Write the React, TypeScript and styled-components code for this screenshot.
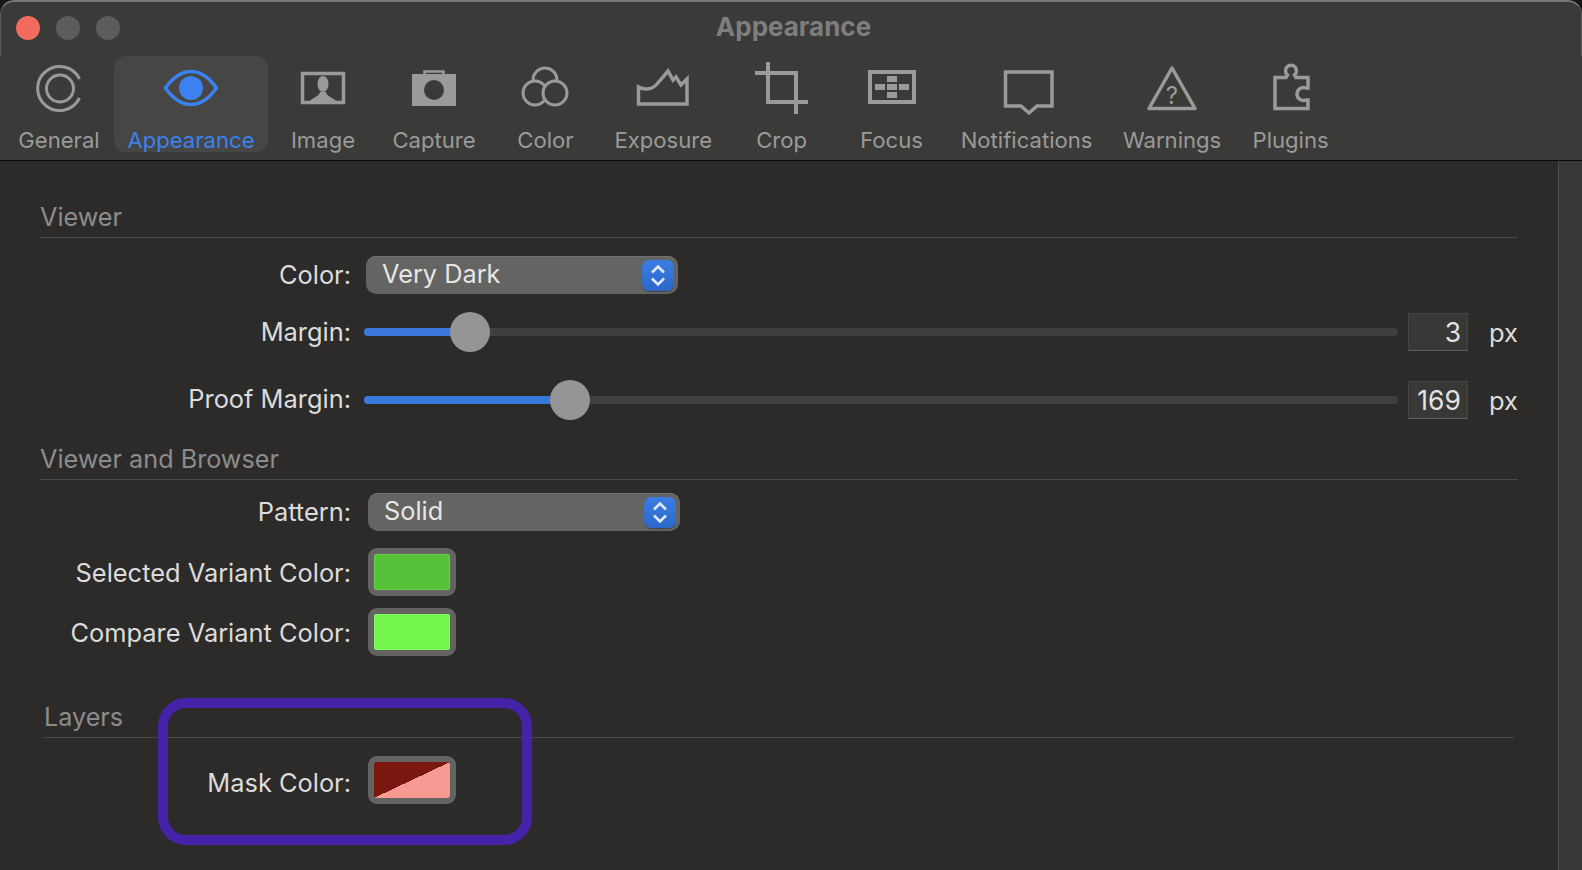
import styled, { createGlobalStyle } from "styled-components";

const GlobalStyle = createGlobalStyle`
  html, body {
    margin: 0;
    padding: 0;
    background: #161616;
  }
  body {
    font-family: Inter, "Liberation Sans", sans-serif;
    overflow: hidden;
  }
`;

const Window = styled.div`
  position: relative;
  width: 1582px;
  height: 870px;
  display: flex;
  flex-direction: column;
  overflow: hidden;
  background: #2c2b2a;
  border-radius: 14px 14px 0 0;
`;

const TitleBar = styled.div`
  height: 56px;
  flex: none;
  display: flex;
  align-items: center;
  gap: 16px;
  padding: 0 0 2px 15px;
  background: #3a3a38;
  border-radius: 14px 14px 0 0;
  border-style: solid;
  border-width: 2px 1px 0;
  border-color: #777775 #5c5c5a transparent;
  box-sizing: border-box;
`;

const Light = styled.span<{ $color: string }>`
  width: 24px;
  height: 24px;
  border-radius: 50%;
  background: ${(p) => p.$color};
`;

const Title = styled.div`
  flex: 1;
  text-align: center;
  margin-left: -130px;
  font-size: 26px;
  font-weight: 700;
  color: #7e7e7e;
  padding-bottom: 4px;
`;

const Toolbar = styled.div`
  height: 105px;
  flex: none;
  box-sizing: border-box;
  display: flex;
  align-items: flex-start;
  padding-left: 4px;
  background: #3a3a38;
  border-bottom: 1px solid #0c0c0c;
`;

const Tab = styled.div<{ $width: number; $active?: boolean }>`
  width: ${(p) => p.$width}px;
  height: 96px;
  flex: none;
  display: flex;
  flex-direction: column;
  align-items: center;
  border-radius: 12px;
  padding-top: 8px;
  box-sizing: border-box;
  background: ${(p) => (p.$active ? "#464645" : "transparent")};
  color: ${(p) => (p.$active ? "#3b82f0" : "#9a9a9a")};
`;

const TabIcon = styled.svg`
  width: 60px;
  height: 52px;
  flex: none;
  overflow: visible;
`;

const TabLabel = styled.span`
  font-size: 22.1px;
  line-height: 24px;
  margin-top: 12px;
  white-space: nowrap;
`;

const Body = styled.div`
  flex: 1;
  display: flex;
  min-height: 0;
`;

const Main = styled.div`
  flex: 1;
  padding: 37px 40px 0;
  color: #dcdcdc;
`;

const ScrollStrip = styled.div`
  width: 24px;
  flex: none;
  box-sizing: border-box;
  background: #383836;
  border-left: 1px solid #4a4a48;
`;

const Section = styled.section<{ $top?: number }>`
  margin-top: ${(p) => p.$top ?? 0}px;
`;

const Heading = styled.h2<{ $inset?: number }>`
  margin: 0 ${(p) => p.$inset ?? 0}px;
  height: 39px;
  font-size: 25.2px;
  font-weight: 400;
  line-height: 38px;
  color: #8c8c8c;
  border-bottom: 1px solid #494947;
`;

const Row = styled.div<{ $top: number; $gap: number }>`
  margin-top: ${(p) => p.$top}px;
  display: grid;
  grid-template-columns: 311px 1fr;
  column-gap: ${(p) => p.$gap}px;
  align-items: center;
`;

const Label = styled.label<{ $drop?: number }>`
  text-align: right;
  font-size: 25.4px;
  line-height: 38px;
  white-space: nowrap;
  margin-top: ${(p) => (p.$drop ?? 0) * 2}px;
`;

const SelectBox = styled.div`
  position: relative;
  width: 312px;
  height: 38px;
  box-sizing: border-box;
  padding: 0 0 3px 16px;
  display: flex;
  align-items: center;
  font-size: 25.3px;
  color: #e6e6e6;
  background: #646462;
  border-radius: 10px;
  box-shadow: inset 0 1px 0 #727270;
`;

const SelectArrows = styled.span`
  position: absolute;
  right: 4px;
  top: 4px;
  width: 32px;
  height: 31px;
  display: flex;
  align-items: center;
  justify-content: center;
  border-radius: 7px;
  background: linear-gradient(#3b7de3, #2c67c9);
  box-shadow: 0 1px 1px rgba(0, 0, 0, 0.3);
`;

const SliderRowBody = styled.div`
  display: flex;
  align-items: center;
  height: 38px;
`;

const SliderTrack = styled.div`
  position: relative;
  flex: 1;
  height: 8px;
  border-radius: 4px;
  background: #3f3f3d;
`;

const SliderFill = styled.div`
  height: 100%;
  border-radius: 4px 0 0 4px;
  background: #3a78dc;
`;

const SliderThumb = styled.div`
  position: absolute;
  top: 50%;
  width: 40px;
  height: 40px;
  margin: -20px 0 0 -20px;
  border-radius: 50%;
  background: #959595;
`;

const NumberBox = styled.div`
  width: 60px;
  height: 38px;
  flex: none;
  margin-left: 10px;
  box-sizing: border-box;
  padding-right: 6px;
  display: flex;
  align-items: center;
  justify-content: flex-end;
  font-size: 26.5px;
  color: #e2e2e2;
  background: #383836;
  border: 1px solid #444442;
  border-bottom-color: #5e5e5c;
`;

const Unit = styled.span`
  width: 29px;
  flex: none;
  margin-left: 21px;
  font-size: 25.5px;
  white-space: nowrap;
`;

const ColorWell = styled.div`
  width: 88px;
  height: 48px;
  box-sizing: border-box;
  padding: 6px;
  background: #636361;
  border-radius: 9px;
`;

const ColorFace = styled.div<{ $fill: string; $edge: string }>`
  height: 100%;
  border-radius: 3px;
  background: ${(p) => p.$fill};
  box-shadow: inset 0 0 0 1px ${(p) => p.$edge};
`;

const Callout = styled.div`
  position: absolute;
  left: 158px;
  top: 698px;
  width: 374px;
  height: 147px;
  box-sizing: border-box;
  border: 10px solid #4523a9;
  border-radius: 28px;
  pointer-events: none;
`;

const Stroke = { fill: "none", stroke: "currentColor", strokeWidth: 3.5 };

const tabs = [
  {
    name: "General",
    width: 110,
    icon: (
      <>
        <path d="M50.5 15 A22 22 0 1 0 50.5 34" {...Stroke} strokeWidth={3} />
        <circle cx="31" cy="24.5" r="13.5" {...Stroke} strokeWidth={3} />
      </>
    ),
  },
  {
    name: "Appearance",
    width: 154,
    active: true,
    icon: (
      <>
        <path d="M4.5 24 C13 12 21 7.5 30 7.5 C39 7.5 47 12 55.5 24 C47 36 39 40.5 30 40.5 C21 40.5 13 36 4.5 24Z" {...Stroke} />
        <circle cx="30" cy="24" r="12" fill="currentColor" />
      </>
    ),
  },
  {
    name: "Image",
    width: 110,
    icon: (
      <>
        <rect x="9.5" y="9.5" width="41" height="29" {...Stroke} />
        <ellipse cx="30" cy="20" rx="5.5" ry="8" fill="currentColor" />
        <path d="M16 38 C20 33 26 33 27 28 H33 C34 33 40 33 44 38 Z" fill="currentColor" />
      </>
    ),
  },
  {
    name: "Capture",
    width: 112,
    icon: (
      <>
        <path d="M20.5 11 V7.5 H39.5 V11" {...Stroke} strokeWidth={2.5} />
        <rect x="8" y="10" width="44" height="32" fill="currentColor" />
        <circle cx="30" cy="26" r="10" fill="#3a3a38" />
      </>
    ),
  },
  {
    name: "Color",
    width: 111,
    icon: (
      <>
        <circle cx="29" cy="16" r="12" {...Stroke} fill="#3a3a38" strokeWidth={3} />
        <circle cx="19" cy="29" r="12" {...Stroke} fill="#3a3a38" strokeWidth={3} />
        <circle cx="39" cy="29" r="12" {...Stroke} fill="#3a3a38" strokeWidth={3} />
      </>
    ),
  },
  {
    name: "Exposure",
    width: 124.6,
    icon: (
      <path d="M5.5 40 V23 C11 26 19 26 24 20 L35 7 L40 16 L43 13 L48 21 L54 15 V40 Z" {...Stroke} />
    ),
  },
  {
    name: "Crop",
    width: 112,
    icon: (
      <path d="M3 9 H44 V50 M16 -2 V38 H56" {...Stroke} strokeWidth={4} />
    ),
  },
  {
    name: "Focus",
    width: 108,
    icon: (
      <>
        <rect x="8" y="8" width="44" height="30" {...Stroke} strokeWidth={4} />
        <path d="M25 12 H35 V18 H25 Z M25 20 H35 V26 H25 Z M25 28 H35 V34 H25 Z M13 20 H23 V26 H13 Z M37 20 H47 V26 H37 Z" fill="currentColor" />
      </>
    ),
  },
  {
    name: "Notifications",
    width: 162,
    icon: (
      <path d="M8.5 8 H55 V42 H40 L32 49 L24 42 H8.5 Z" {...Stroke} />
    ),
  },
  {
    name: "Warnings",
    width: 129,
    icon: (
      <>
        <path d="M30 4 L7 44.5 H53 Z" {...Stroke} strokeLinejoin="round" />
        <text x="30" y="39.5" textAnchor="middle" fontSize="24" fill="currentColor" fontFamily="Inter, sans-serif">?</text>
      </>
    ),
  },
  {
    name: "Plugins",
    width: 108,
    icon: (
      <path d="M14 13.5 H25 L26.5 11 A5.5 5.5 0 1 1 33.5 11 L35 13.5 H47 V24 H45 A6.5 6.5 0 1 0 45 36 H47 V44.5 H14 Z" {...Stroke} />
    ),
  },
];

function SelectField({ value }: { value: string }) {
  return (
    <SelectBox>
      {value}
      <SelectArrows>
        <svg width="18" height="25" viewBox="0 0 18 25" fill="none" stroke="#dfe9fa" strokeWidth="2.6">
          <path d="M3 9.5 L9 3.5 L15 9.5 M3 15.5 L9 21.5 L15 15.5" />
        </svg>
      </SelectArrows>
    </SelectBox>
  );
}

function SliderField({ percent, value }: { percent: number; value: number }) {
  return (
    <SliderRowBody>
      <SliderTrack>
        <SliderFill style={{ width: `${percent}%` }} />
        <SliderThumb style={{ left: `${percent}%` }} />
      </SliderTrack>
      <NumberBox>{value}</NumberBox>
      <Unit>px</Unit>
    </SliderRowBody>
  );
}

export default function App() {
  return (
    <>
      <GlobalStyle />
      <Window>
        <TitleBar>
          <Light $color="#f26a60" />
          <Light $color="#5c5c5a" />
          <Light $color="#5c5c5a" />
          <Title>Appearance</Title>
        </TitleBar>
        <Toolbar>
          {tabs.map((tab) => (
            <Tab key={tab.name} $width={tab.width} $active={tab.active}>
              <TabIcon viewBox="0 0 60 52">{tab.icon}</TabIcon>
              <TabLabel>{tab.name}</TabLabel>
            </Tab>
          ))}
        </Toolbar>
        <Body>
          <Main>
            <Section>
              <Heading>Viewer</Heading>
              <Row $top={18} $gap={15}>
                <Label>Color:</Label>
                <SelectField value="Very Dark" />
              </Row>
              <Row $top={19} $gap={13}>
                <Label>Margin:</Label>
                <SliderField percent={10.25} value={3} />
              </Row>
              <Row $top={30} $gap={13}>
                <Label $drop={-1}>Proof Margin:</Label>
                <SliderField percent={19.9} value={169} />
              </Row>
            </Section>
            <Section $top={21}>
              <Heading>Viewer and Browser</Heading>
              <Row $top={13} $gap={17}>
                <Label>Pattern:</Label>
                <SelectField value="Solid" />
              </Row>
              <Row $top={17} $gap={17}>
                <Label $drop={1}>Selected Variant Color:</Label>
                <ColorWell>
                  <ColorFace $fill="#56c138" $edge="#6ad14c" />
                </ColorWell>
              </Row>
              <Row $top={12} $gap={17}>
                <Label $drop={1}>Compare Variant Color:</Label>
                <ColorWell>
                  <ColorFace $fill="#72f64c" $edge="#86fa62" />
                </ColorWell>
              </Row>
            </Section>
            <Section $top={42}>
              <Heading $inset={4}>Layers</Heading>
              <Row $top={18} $gap={17}>
                <Label $drop={3}>Mask Color:</Label>
                <ColorWell>
                  <ColorFace
                    $fill="linear-gradient(to bottom right, #7a1710 50%, #f79a93 50%)"
                    $edge="transparent"
                  />
                </ColorWell>
              </Row>
            </Section>
          </Main>
          <ScrollStrip />
        </Body>
        <Callout />
      </Window>
    </>
  );
}
